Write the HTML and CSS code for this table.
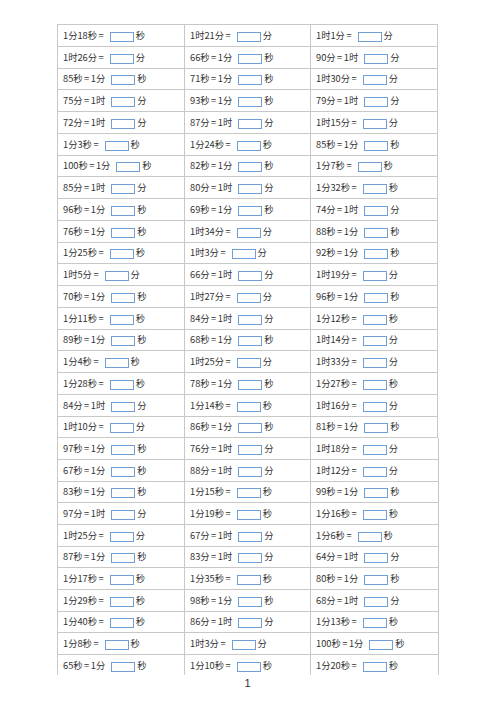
FILE: index.html
```html
<!DOCTYPE html>
<html lang="zh">
<head>
<meta charset="utf-8">
<link rel="stylesheet" href="styles.css">
</head>
<body>
<div class="page">
<table class="sheet first">
<tr><td>1分18秒 =<span class="box"></span>秒</td><td>1时21分 =<span class="box"></span>分</td><td>1时1分 =<span class="box"></span>分</td></tr>
<tr><td>1时26分 =<span class="box"></span>分</td><td>66秒 = 1分<span class="box"></span>秒</td><td>90分 = 1时<span class="box"></span>分</td></tr>
<tr><td>85秒 = 1分<span class="box"></span>秒</td><td>71秒 = 1分<span class="box"></span>秒</td><td>1时30分 =<span class="box"></span>分</td></tr>
<tr><td>75分 = 1时<span class="box"></span>分</td><td>93秒 = 1分<span class="box"></span>秒</td><td>79分 = 1时<span class="box"></span>分</td></tr>
<tr><td>72分 = 1时<span class="box"></span>分</td><td>87分 = 1时<span class="box"></span>分</td><td>1时15分 =<span class="box"></span>分</td></tr>
<tr><td>1分3秒 =<span class="box"></span>秒</td><td>1分24秒 =<span class="box"></span>秒</td><td>85秒 = 1分<span class="box"></span>秒</td></tr>
<tr><td>100秒 = 1分<span class="box"></span>秒</td><td>82秒 = 1分<span class="box"></span>秒</td><td>1分7秒 =<span class="box"></span>秒</td></tr>
<tr><td>85分 = 1时<span class="box"></span>分</td><td>80分 = 1时<span class="box"></span>分</td><td>1分32秒 =<span class="box"></span>秒</td></tr>
<tr><td>96秒 = 1分<span class="box"></span>秒</td><td>69秒 = 1分<span class="box"></span>秒</td><td>74分 = 1时<span class="box"></span>分</td></tr>
<tr><td>76秒 = 1分<span class="box"></span>秒</td><td>1时34分 =<span class="box"></span>分</td><td>88秒 = 1分<span class="box"></span>秒</td></tr>
<tr><td>1分25秒 =<span class="box"></span>秒</td><td>1时3分 =<span class="box"></span>分</td><td>92秒 = 1分<span class="box"></span>秒</td></tr>
<tr><td>1时5分 =<span class="box"></span>分</td><td>66分 = 1时<span class="box"></span>分</td><td>1时19分 =<span class="box"></span>分</td></tr>
<tr><td>70秒 = 1分<span class="box"></span>秒</td><td>1时27分 =<span class="box"></span>分</td><td>96秒 = 1分<span class="box"></span>秒</td></tr>
<tr><td>1分11秒 =<span class="box"></span>秒</td><td>84分 = 1时<span class="box"></span>分</td><td>1分12秒 =<span class="box"></span>秒</td></tr>
<tr><td>89秒 = 1分<span class="box"></span>秒</td><td>68秒 = 1分<span class="box"></span>秒</td><td>1时14分 =<span class="box"></span>分</td></tr>
<tr><td>1分4秒 =<span class="box"></span>秒</td><td>1时25分 =<span class="box"></span>分</td><td>1时33分 =<span class="box"></span>分</td></tr>
<tr><td>1分28秒 =<span class="box"></span>秒</td><td>78秒 = 1分<span class="box"></span>秒</td><td>1分27秒 =<span class="box"></span>秒</td></tr>
<tr><td>84分 = 1时<span class="box"></span>分</td><td>1分14秒 =<span class="box"></span>秒</td><td>1时16分 =<span class="box"></span>分</td></tr>
<tr><td>1时10分 =<span class="box"></span>分</td><td>86秒 = 1分<span class="box"></span>秒</td><td>81秒 = 1分<span class="box"></span>秒</td></tr>
</table>
<table class="sheet second">
<tr><td>97秒 = 1分<span class="box"></span>秒</td><td>76分 = 1时<span class="box"></span>分</td><td>1时18分 =<span class="box"></span>分</td></tr>
<tr><td>67秒 = 1分<span class="box"></span>秒</td><td>88分 = 1时<span class="box"></span>分</td><td>1时12分 =<span class="box"></span>分</td></tr>
<tr><td>83秒 = 1分<span class="box"></span>秒</td><td>1分15秒 =<span class="box"></span>秒</td><td>99秒 = 1分<span class="box"></span>秒</td></tr>
<tr><td>97分 = 1时<span class="box"></span>分</td><td>1分19秒 =<span class="box"></span>秒</td><td>1分16秒 =<span class="box"></span>秒</td></tr>
<tr><td>1时25分 =<span class="box"></span>分</td><td>67分 = 1时<span class="box"></span>分</td><td>1分6秒 =<span class="box"></span>秒</td></tr>
<tr><td>87秒 = 1分<span class="box"></span>秒</td><td>83分 = 1时<span class="box"></span>分</td><td>64分 = 1时<span class="box"></span>分</td></tr>
<tr><td>1分17秒 =<span class="box"></span>秒</td><td>1分35秒 =<span class="box"></span>秒</td><td>80秒 = 1分<span class="box"></span>秒</td></tr>
<tr><td>1分29秒 =<span class="box"></span>秒</td><td>98秒 = 1分<span class="box"></span>秒</td><td>68分 = 1时<span class="box"></span>分</td></tr>
<tr><td>1分40秒 =<span class="box"></span>秒</td><td>86分 = 1时<span class="box"></span>分</td><td>1分13秒 =<span class="box"></span>秒</td></tr>
<tr><td>1分8秒 =<span class="box"></span>秒</td><td>1时3分 =<span class="box"></span>分</td><td>100秒 = 1分<span class="box"></span>秒</td></tr>
<tr><td>65秒 = 1分<span class="box"></span>秒</td><td>1分10秒 =<span class="box"></span>秒</td><td>1分20秒 =<span class="box"></span>秒</td></tr>
</table>
<div class="pageno">1</div>
</div>
</body>
</html>
```

FILE: styles.css
```css
html, body {
  margin: 0;
  padding: 0;
  background: #ffffff;
}
.page {
  padding: 24px 0 0 57px;
  font-family: "Noto Sans CJK SC", "Noto Sans", sans-serif;
  color: #333333;
}
.sheet {
  border-collapse: collapse;
  table-layout: fixed;
  font-size: 9.3px;
  word-spacing: -0.6px;
}
.sheet.first {
  width: 381px;
}
.sheet.second {
  width: 382px;
}
.sheet td {
  border: 1px solid #c8c8c8;
  padding: 0 0 0 5px;
  height: 20.75px;
  line-height: 12px;
  white-space: nowrap;
  vertical-align: middle;
  overflow: hidden;
}
.sheet.second td {
  height: 20.67px;
}
.sheet.second tr:first-child td {
  border-top: none;
}
.sheet.second tr:last-child td {
  border-bottom: none;
}
.sheet td:nth-child(1) { width: 121px; }
.sheet td:nth-child(2) { width: 120px; }
.box {
  display: inline-block;
  width: 22px;
  height: 8px;
  border: 1px solid #6f9fd6;
  margin: 0 2px 0 6px;
  vertical-align: -3px;
}
.pageno {
  width: 381px;
  text-align: center;
  font-size: 11px;
  line-height: 12px;
  margin-top: 2px;
  font-family: "Liberation Sans", sans-serif;
}
```
